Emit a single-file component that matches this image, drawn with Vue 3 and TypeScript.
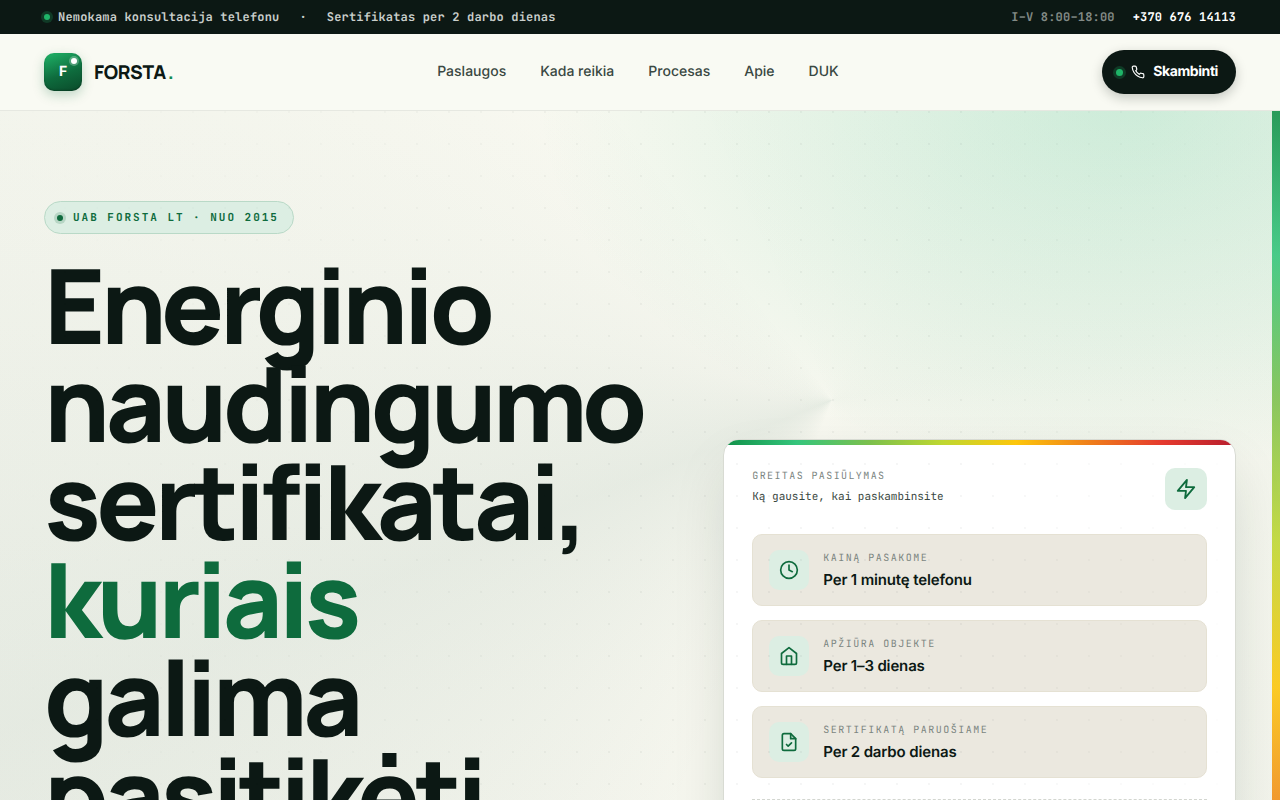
<script setup lang="ts">
interface NavLink {
  label: string
  href: string
}

interface Offer {
  icon: 'clock' | 'home' | 'file'
  label: string
  value: string
}

const links: NavLink[] = [
  { label: 'Paslaugos', href: '#paslaugos' },
  { label: 'Kada reikia', href: '#kada-reikia' },
  { label: 'Procesas', href: '#procesas' },
  { label: 'Apie', href: '#apie' },
  { label: 'DUK', href: '#duk' },
]

const offers: Offer[] = [
  { icon: 'clock', label: 'Kainą pasakome', value: 'Per 1 minutę telefonu' },
  { icon: 'home', label: 'Apžiūra objekte', value: 'Per 1–3 dienas' },
  { icon: 'file', label: 'Sertifikatą paruošiame', value: 'Per 2 darbo dienas' },
]
</script>

<template>
  <div class="page">
    <div class="topbar">
      <div class="topbar-group">
        <span class="pulse"></span>
        <span>Nemokama konsultacija telefonu</span>
        <span class="separator">·</span>
        <span>Sertifikatas per 2 darbo dienas</span>
      </div>
      <div class="topbar-contact">
        <span class="hours">I–V 8:00–18:00</span>
        <a class="phone" href="tel:+37067614113">+370 676 14113</a>
      </div>
    </div>

    <header class="header">
      <a class="brand" href="#top">
        <span class="logo">F</span>
        <span class="brand-name">FORSTA<span class="brand-dot">.</span></span>
      </a>
      <nav class="nav">
        <a v-for="link in links" :key="link.href" :href="link.href">{{ link.label }}</a>
      </nav>
      <a class="call" href="tel:+37067614113">
        <span class="pulse"></span>
        <svg class="call-icon" viewBox="0 0 24 24" aria-hidden="true">
          <path d="M22 16.92v3a2 2 0 0 1-2.18 2 19.79 19.79 0 0 1-8.63-3.07 19.5 19.5 0 0 1-6-6 19.79 19.79 0 0 1-3.07-8.67A2 2 0 0 1 4.11 2h3a2 2 0 0 1 2 1.72 12.84 12.84 0 0 0 .7 2.81 2 2 0 0 1-.45 2.11L8.09 9.91a16 16 0 0 0 6 6l1.27-1.27a2 2 0 0 1 2.11-.45 12.84 12.84 0 0 0 2.81.7A2 2 0 0 1 22 16.92z" />
        </svg>
        <span>Skambinti</span>
      </a>
    </header>

    <main id="top" class="hero">
      <section class="intro">
        <p class="badge"><span class="pulse dark"></span>UAB Forsta LT · nuo 2015</p>
        <h1>Energinio naudingumo sertifikatai, <em>kuriais</em> galima pasitikėti</h1>
      </section>

      <aside class="card">
        <div class="card-head">
          <div>
            <p class="eyebrow">Greitas pasiūlymas</p>
            <p class="card-note">Ką gausite, kai paskambinsite</p>
          </div>
          <span class="tile large">
            <svg viewBox="0 0 24 24" aria-hidden="true">
              <path d="M13 2 3 14h9l-1 8 10-12h-9l1-8z" />
            </svg>
          </span>
        </div>
        <ul class="offers">
          <li v-for="offer in offers" :key="offer.label" class="offer">
            <span class="tile">
              <svg viewBox="0 0 24 24" aria-hidden="true">
                <template v-if="offer.icon === 'clock'">
                  <circle cx="12" cy="12" r="10" />
                  <path d="M12 6v6l4 2" />
                </template>
                <template v-else-if="offer.icon === 'home'">
                  <path d="M3 9l9-7 9 7v11a2 2 0 0 1-2 2H5a2 2 0 0 1-2-2z" />
                  <path d="M9 22V12h6v10" />
                </template>
                <template v-else>
                  <path d="M14 2H6a2 2 0 0 0-2 2v16a2 2 0 0 0 2 2h12a2 2 0 0 0 2-2V8z" />
                  <path d="M14 2v6h6" />
                  <path d="M9 15l2 2 4-4" />
                </template>
              </svg>
            </span>
            <div>
              <p class="eyebrow">{{ offer.label }}</p>
              <p class="offer-value">{{ offer.value }}</p>
            </div>
          </li>
        </ul>
        <div class="card-foot"></div>
      </aside>
    </main>
  </div>
</template>

<style>
body {
  margin: 0;
  background: #f9faf3;
}
</style>

<style scoped>
.page {
  --ink: #0c1814;
  --green: #0e6b3d;
  --bright: #1fb468;
  --mint: #dceee3;
  --mono: "JetBrains Mono", "DejaVu Sans Mono", monospace;
  --display: Manrope, Inter, sans-serif;
  --scale: #109048, #35c57c, #7cc04c, #bfd730, #fdc60b, #ef7f1a, #e53a2e, #b71f2e;
  height: 100vh;
  overflow: hidden;
  color: var(--ink);
  font-family: Inter, sans-serif;
  text-rendering: geometricPrecision;
}

p,
h1,
ul {
  margin: 0;
  padding: 0;
}

a {
  color: inherit;
  text-decoration: none;
}

svg {
  fill: none;
  stroke: currentColor;
  stroke-width: 2;
  stroke-linecap: round;
  stroke-linejoin: round;
}

.pulse {
  flex: none;
  width: 6px;
  height: 6px;
  border-radius: 50%;
  background: var(--bright);
  box-shadow: 0 0 0 3px rgba(31, 180, 104, 0.22);
}

.pulse.dark {
  background: var(--green);
  box-shadow: 0 0 0 3px rgba(14, 107, 61, 0.18);
}

.topbar {
  display: flex;
  align-items: center;
  justify-content: space-between;
  height: 34px;
  padding: 0 44px;
  background: var(--ink);
  color: #c9cecb;
  font: 600 12px/16px var(--mono);
  letter-spacing: 0.015em;
}

.topbar-group {
  display: flex;
  align-items: center;
  gap: 8px;
}

.separator {
  margin: 0 12px;
}

.topbar-contact {
  display: flex;
  gap: 18px;
}

.hours {
  color: #838b87;
}

.phone {
  color: #fff;
}

.header {
  display: flex;
  align-items: center;
  justify-content: space-between;
  height: 76px;
  padding: 0 44px;
  background: #f9faf3;
  border-bottom: 1px solid #e6e8e1;
}

.brand {
  display: flex;
  align-items: center;
  gap: 12px;
}

.logo {
  position: relative;
  display: grid;
  place-items: center;
  width: 38px;
  height: 38px;
  border-radius: 10px;
  background: linear-gradient(160deg, #1fb468, #0e6b3d 55%, #0a4a2a);
  box-shadow: 0 4px 12px rgba(14, 107, 61, 0.25), inset 0 -1px 2px rgba(0, 0, 0, 0.25);
  color: #fff;
  font-size: 14px;
  line-height: 20px;
  font-weight: 700;
}

.logo::after {
  content: "";
  position: absolute;
  top: 5px;
  right: 5px;
  width: 6px;
  height: 6px;
  border-radius: 50%;
  background: #fff;
  box-shadow: 0 0 0 2px rgba(255, 255, 255, 0.25);
}

.brand-name {
  font: 800 19px/24px var(--display);
  letter-spacing: -0.02em;
}

.brand-dot {
  margin-left: 2px;
  color: #128a50;
}

.nav {
  display: flex;
  gap: 34px;
  color: #3a4842;
  font-size: 14px;
  line-height: 22px;
  font-weight: 500;
}

.call {
  display: flex;
  align-items: center;
  gap: 8px;
  height: 44px;
  box-sizing: border-box;
  padding: 0 18px 0 14px;
  border-radius: 22px;
  background: var(--ink);
  box-shadow: 0 4px 12px rgba(12, 24, 20, 0.22);
  color: #fff;
  font-size: 14px;
  line-height: 20px;
  font-weight: 700;
  letter-spacing: -0.03em;
}

.call .pulse {
  width: 7px;
  height: 7px;
}

.call-icon {
  width: 14px;
  height: 14px;
}

.hero {
  position: relative;
  display: grid;
  grid-template-columns: 1.2fr 1fr;
  gap: 64px;
  align-items: start;
  min-height: 1008px;
  box-sizing: border-box;
  padding: 90px 44px 0;
  background:
    radial-gradient(ellipse 590px 370px at 88% -10px, rgba(40, 190, 130, 0.2), rgba(40, 190, 130, 0)),
    conic-gradient(from 200deg at 65% 289px, rgba(14, 107, 61, 0) 0deg, rgba(14, 80, 61, 0.07) 48deg, rgba(14, 80, 61, 0.03) 82deg, rgba(14, 107, 61, 0) 125deg, rgba(14, 107, 61, 0.02) 240deg, rgba(14, 107, 61, 0) 360deg),
    linear-gradient(#f9f9f1, #f3f4ec);
}

.hero::before {
  content: "";
  position: absolute;
  top: 0;
  right: 0;
  bottom: 0;
  width: 8px;
  background: linear-gradient(180deg, var(--scale));
  opacity: 0.88;
}

.hero::after {
  content: "";
  position: absolute;
  inset: 0;
  z-index: 1;
  background: radial-gradient(circle at 1px 1px, rgba(12, 24, 20, 0.04) 1px, transparent 0) 0 0 / 32px 32px;
  mask-image: linear-gradient(90deg, transparent, #000 50%, #000 75%, transparent);
  pointer-events: none;
}

.badge {
  display: inline-flex;
  align-items: center;
  gap: 10px;
  box-sizing: border-box;
  height: 33px;
  padding: 0 14px 0 12px;
  border: 1px solid #b9d9c7;
  border-radius: 17px;
  background: var(--mint);
  color: var(--green);
  font: 600 11px/16px var(--mono);
  letter-spacing: 0.18em;
  text-transform: uppercase;
}

h1 {
  margin-top: 22px;
  font: 800 104px/98px var(--display);
  letter-spacing: -0.045em;
}

h1 em {
  color: var(--green);
  font-style: normal;
}

.card {
  position: relative;
  min-height: 480px;
  box-sizing: border-box;
  margin-top: 238px;
  padding: 28px;
  overflow: hidden;
  border: 1px solid #d8dbd3;
  border-radius: 16px;
  background: #fff;
  box-shadow: 0 24px 60px -12px rgba(12, 40, 28, 0.18);
}

.card::before {
  content: "";
  position: absolute;
  top: 0;
  left: 0;
  right: 0;
  height: 5px;
  background: linear-gradient(90deg, var(--scale));
}

.card-head {
  display: flex;
  justify-content: space-between;
  margin-bottom: 24px;
}

.eyebrow {
  color: #7b857f;
  font: 400 10px/16px var(--mono);
  letter-spacing: 0.15em;
  text-transform: uppercase;
}

.card-head .eyebrow {
  letter-spacing: 0.14em;
}

.card-note {
  margin-top: 5px;
  color: #3a4842;
  font: 400 11px/16px var(--mono);
}

.tile {
  display: grid;
  flex: none;
  place-items: center;
  width: 40px;
  height: 40px;
  border-radius: 10px;
  background: var(--mint);
  color: var(--green);
}

.tile svg {
  width: 20px;
  height: 20px;
}

.tile.large {
  width: 42px;
  height: 42px;
}

.tile.large svg {
  width: 22px;
  height: 22px;
}

.offers {
  display: grid;
  gap: 14px;
  list-style: none;
}

.offer {
  display: flex;
  align-items: center;
  gap: 14px;
  padding: 15px 16px;
  border: 1px solid #e5e1d3;
  border-radius: 10px;
  background: #ebe8df;
}

.offer-value {
  margin-top: 4px;
  font-size: 15px;
  line-height: 20px;
  font-weight: 600;
  letter-spacing: -0.01em;
}

.card-foot {
  margin-top: 21px;
  border-top: 1px dashed #d3d6d0;
}
</style>
